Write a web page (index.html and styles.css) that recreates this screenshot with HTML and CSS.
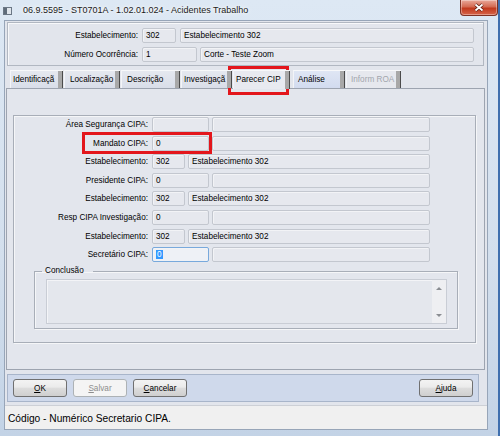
FILE: index.html
```html
<!DOCTYPE html>
<html lang="pt-BR">
<head>
    <meta charset="UTF-8">
    <title>Acidentes Trabalho</title>
    <link rel="stylesheet" href="styles.css">
</head>
<body>
    <div class="janela">
        <div class="titulo">
            <svg class="icone" width="9" height="8" viewBox="0 0 9 8">
                <rect x="0.5" y="0.5" width="8" height="7" fill="#dfe5ec" stroke="#6b7785"/>
                <rect x="1" y="1" width="3" height="6" fill="#5f6c7a"/>
            </svg>
            <span class="titulo-texto">06.9.5595 - ST0701A - 1.02.01.024 - Acidentes Trabalho</span>
            <div class="fechar">
                <svg width="12" height="9" viewBox="0 0 12 9">
                    <path d="M2.5 1.5L9.5 7.5M9.5 1.5L2.5 7.5" stroke="#5b1b10" stroke-width="3.4"/>
                    <path d="M2.5 1.5L9.5 7.5M9.5 1.5L2.5 7.5" stroke="#fff" stroke-width="1.8"/>
                </svg>
            </div>
        </div>

        <div class="cliente">
            <div class="cabecalho">
                <div class="linha">
                    <span class="rotulo-cab">Estabelecimento:</span>
                    <div class="campo cab-cod">302</div>
                    <div class="campo cab-desc">Estabelecimento 302</div>
                </div>
                <div class="linha">
                    <span class="rotulo-cab">Número Ocorrência:</span>
                    <div class="campo cab-num">1</div>
                    <div class="campo cab-desc">Corte - Teste Zoom</div>
                </div>
            </div>

            <div class="abas">
                <div class="aba a1"><span class="aba-texto">Identificaçã</span><span class="grip"></span></div>
                <div class="aba a2"><span class="aba-texto">Localização</span><span class="grip"></span></div>
                <div class="aba a3"><span class="aba-texto">Descrição</span><span class="grip"></span></div>
                <div class="aba a4"><span class="aba-texto">Investigaçã</span><span class="grip"></span></div>
                <div class="aba a5 ativa"><span class="aba-texto">Parecer CIP</span><span class="grip"></span></div>
                <div class="aba a6 hover"><span class="aba-texto">Análise</span><span class="grip"></span></div>
                <div class="aba a7 inativa"><span class="aba-texto">Inform ROA</span><span class="grip"></span></div>
            </div>

            <div class="pagina">
                <div class="grupo">
                    <div class="form">
                        <span class="rotulo">Área Segurança CIPA:</span>
                        <div class="campos"><div class="campo cod"></div><div class="campo desc"></div></div>

                        <span class="rotulo">Mandato CIPA:</span>
                        <div class="campos"><div class="campo cod">0</div><div class="campo desc"></div></div>

                        <span class="rotulo">Estabelecimento:</span>
                        <div class="campos"><div class="campo estab">302</div><div class="campo desc">Estabelecimento 302</div></div>

                        <span class="rotulo">Presidente CIPA:</span>
                        <div class="campos"><div class="campo cod">0</div><div class="campo desc"></div></div>

                        <span class="rotulo">Estabelecimento:</span>
                        <div class="campos"><div class="campo estab">302</div><div class="campo desc">Estabelecimento 302</div></div>

                        <span class="rotulo">Resp CIPA Investigação:</span>
                        <div class="campos"><div class="campo cod">0</div><div class="campo desc"></div></div>

                        <span class="rotulo">Estabelecimento:</span>
                        <div class="campos"><div class="campo estab">302</div><div class="campo desc">Estabelecimento 302</div></div>

                        <span class="rotulo">Secretário CIPA:</span>
                        <div class="campos"><div class="campo cod foco"><span class="selecao">0</span></div><div class="campo desc"></div></div>
                    </div>

                    <fieldset class="conclusao">
                        <legend>Conclusão</legend>
                        <div class="texto">
                            <div class="rolagem">
                                <span class="seta-cima"></span>
                                <span class="seta-baixo"></span>
                            </div>
                        </div>
                    </fieldset>
                </div>
            </div>

            <div class="botoes">
                <div class="botao"><u>O</u>K</div>
                <div class="botao desab"><u>S</u>alvar</div>
                <div class="botao"><u>C</u>ancelar</div>
                <div class="botao ajuda"><u>A</u>juda</div>
            </div>

            <div class="status">Código - Numérico Secretario CIPA.</div>
        </div>
    </div>

    <!-- marcações em vermelho -->
    <div class="destaque destaque-aba"></div>
    <div class="destaque destaque-mandato"></div>
</body>
</html>
```

FILE: styles.css
```css
*{
    margin: 0;
    padding: 0;
    box-sizing: border-box;
}
body{
    width: 500px;
    height: 436px;
    overflow: hidden;
    position: relative;
    background: #3f6fae;
    font-family: "Liberation Sans", Arial, sans-serif;
    font-size: 8.2px;
    color: #000;
}

/* moldura da janela */
.janela{
    width: 498px;
    height: 436px;
    display: flex;
    flex-direction: column;
    background: linear-gradient(#dde8f4, #d3dfed 60%, #c3d3e6);
}
.titulo{
    height: 20px;
    flex-shrink: 0;
    display: flex;
    align-items: flex-start;
}
.icone{
    margin: 7px 0 0 3px;
}
.titulo-texto{
    margin: 5px 0 0 11px;
    font-size: 9px;
    line-height: 11px;
    color: #1a1a1a;
    text-shadow: 0 0 6px #fff, 0 0 3px #fff;
}
.fechar{
    margin-left: auto;
    width: 38px;
    height: 16px;
    border: 1px solid #7e3124;
    border-top: none;
    border-radius: 0 0 4px 4px;
    background: linear-gradient(#e9a99a, #d46a52 45%, #c1391d 55%, #d7654a);
    box-shadow: inset 0 0 0 1px rgba(255, 255, 255, .35);
    display: flex;
    align-items: center;
    justify-content: center;
}

.cliente{
    flex: 1;
    margin: 0 10px 6px 4px;
    border: 1px solid #97a5b8;
    background: #e2e5ec;
    display: flex;
    flex-direction: column;
}

/* campos */
.campo{
    height: 15px;
    border: 1px solid #c3c7cf;
    border-radius: 2px;
    background: #e6e8ee;
    box-shadow: inset 1px 1px 0 #f2f3f6;
    padding-left: 3px;
    line-height: 13px;
    white-space: nowrap;
    overflow: hidden;
}
.foco{
    border-color: #78a9dc;
    background: #eef1f6;
}
.selecao{
    background: #3399ff;
    color: #fff;
    padding: 0 1px;
}

/* cabeçalho */
.cabecalho{
    margin: 1px 3px 0 2px;
    border: 1px solid #b1b7c1;
    box-shadow: inset 1px 1px 0 #f7f8fa;
    padding: 5px 9px 3px 0;
    display: flex;
    flex-direction: column;
    gap: 4px;
}
.linha{
    display: flex;
    height: 15px;
    align-items: center;
}
.rotulo-cab{
    width: 130px;
    margin-right: 4px;
    text-align: right;
}
.cab-cod{
    width: 34px;
    margin-right: 4px;
}
.cab-num{
    width: 55px;
    margin-right: 3px;
}
.cab-desc{
    flex: 1;
}

/* abas */
.abas{
    height: 19px;
    margin-top: 3px;
    padding-left: 5px;
    display: flex;
    align-items: flex-end;
    position: relative;
    z-index: 1;
}
.aba{
    height: 18px;
    margin-right: 1px;
    display: flex;
    background: linear-gradient(#e5e8ef, #d9dee9);
    border-top: 1px solid #f7f8fa;
    border-left: 1px solid #f3f4f7;
}
.aba-texto{
    flex: 1;
    white-space: nowrap;
    padding: 4px 0 0 2px;
    line-height: 10px;
}
.grip{
    width: 5px;
    background: #a8a8a8;
    border-right: 1px solid #4b4b4b;
}
.a1{ width: 53px; }
.a2{ width: 56px; }
.a3{ width: 59px; }
.a4{ width: 51px; }
.a5{ width: 57px; }
.a6{ width: 52px; margin-left: 2px; }
.a7{ width: 55px; }
.a2 .aba-texto, .a3 .aba-texto{
    padding-left: 5px;
}
.a6 .aba-texto, .a7 .aba-texto{
    padding-left: 4px;
}
.ativa{
    height: 19px;
    margin-bottom: -1px;
    background: #e8eaf0;
}
.hover{
    background: linear-gradient(#dfe6f4, #d2dbef);
}
.inativa{
    color: #a2a6ad;
    background: #e6e8ee;
}

/* página da aba */
.pagina{
    height: 282px;
    margin: 0 2px 0 1px;
    border: 1px solid #9da4b0;
    background: #e3e6ed;
}
.grupo{
    margin: 26px 8px 0 6px;
    border: 1px solid #a8aeb8;
    box-shadow: inset 1px 1px 0 #f5f6f8, 1px 1px 0 #f5f6f8;
    padding-top: 1px;
}
.form{
    display: grid;
    grid-template-columns: 134px 1fr;
    grid-auto-rows: 15px;
    row-gap: 3.6px;
    column-gap: 4px;
    margin-right: 45px;
}
.rotulo{
    text-align: right;
    line-height: 15px;
    white-space: nowrap;
}
.campos{
    display: flex;
    gap: 3px;
}
.cod{
    width: 57px;
}
.estab{
    width: 33px;
}
.desc{
    flex: 1;
}

.conclusao{
    margin: 4px 17px 13px 20px;
    border: 1px solid #a8aeb8;
    box-shadow: inset 1px 1px 0 #f5f6f8, 1px 1px 0 #f5f6f8;
    padding: 3px 10px 4px 11px;
    min-width: 0;
}
.conclusao legend{
    margin-left: -4px;
    padding: 0 9px 0 3px;
    line-height: 10px;
}
.texto{
    height: 45px;
    border: 1px solid #c9cdd5;
    background: #e4e7ed;
    box-shadow: inset 1px 1px 0 #f3f4f7;
    display: flex;
    justify-content: flex-end;
}
.rolagem{
    width: 14px;
    background: #eeeff2;
    display: flex;
    flex-direction: column;
    justify-content: space-between;
    align-items: center;
    padding: 7px 0 6px;
}
.seta-cima{
    border-left: 3px solid transparent;
    border-right: 3px solid transparent;
    border-bottom: 3px solid #8a8d92;
}
.seta-baixo{
    border-left: 3px solid transparent;
    border-right: 3px solid transparent;
    border-top: 3px solid #8a8d92;
}

/* botões */
.botoes{
    height: 28px;
    margin: 4px 8px 0 2px;
    border: 1px solid #a8b5ca;
    background: #cfd9eb;
    padding: 0 5px;
    display: flex;
    align-items: center;
    gap: 6px;
}
.botao{
    width: 54px;
    height: 18px;
    border: 1px solid #707070;
    border-radius: 3px;
    background: linear-gradient(#f3f3f3, #ebebeb 45%, #dddddd 50%, #cfcfcf);
    display: flex;
    align-items: center;
    justify-content: center;
}
.desab{
    border-color: #adb2b5;
    background: #f4f4f4;
    color: #8d8d8d;
}
.ajuda{
    margin-left: auto;
}

/* barra de status */
.status{
    margin-top: auto;
    height: 24px;
    border-top: 1px solid #cdd0d6;
    background: #f0f0f0;
    padding: 2px 0 0 3px;
    display: flex;
    align-items: center;
    font-size: 10.2px;
}

/* marcações */
.destaque{
    position: absolute;
    border: 3px solid #e3161c;
}
.destaque-aba{
    left: 228px;
    top: 66px;
    width: 61px;
    height: 29px;
}
.destaque-mandato{
    left: 82px;
    top: 132px;
    width: 130px;
    height: 22px;
}
```
